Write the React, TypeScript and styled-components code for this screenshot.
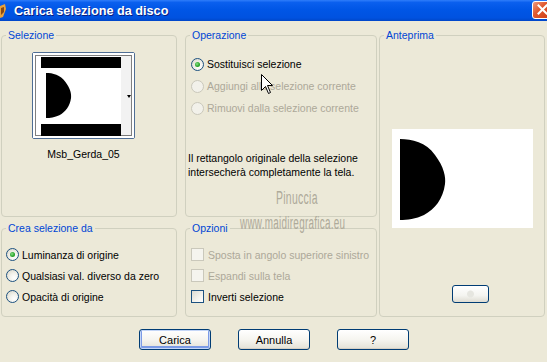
import React from 'react';
import styled, { createGlobalStyle } from 'styled-components';

const GlobalStyle = createGlobalStyle`
  html, body {
    margin: 0;
    padding: 0;
    background: #ece9d8;
  }
`;

const Window = styled.div`
  position: relative;
  width: 547px;
  height: 362px;
  overflow: hidden;
  background: #ece9d8;
  font-family: 'Liberation Sans', Arial, sans-serif;
  font-size: 10.5px;
  color: #000;
`;

const TitleBar = styled.div`
  height: 21px;
  display: flex;
  align-items: center;
  background: linear-gradient(to bottom, #2f7dfa 0%, #0a5fee 12%, #0056e6 45%, #0052e0 85%, #0046c8 100%);
  box-sizing: border-box;
`;

const TitleIcon = styled.div`
  width: 7px;
  height: 16px;
  margin-right: 7px;
  display: flex;
`;

const TitleText = styled.span`
  font-family: 'Liberation Sans', Arial, sans-serif;
  font-weight: bold;
  font-size: 12.7px;
  color: #fff;
  text-shadow: 1px 1px 0 #0a1e80;
  white-space: nowrap;
`;

const CloseButton = styled.div`
  margin-left: auto;
  margin-right: -6px;
  width: 21px;
  height: 18px;
  margin-top: -2px;
  box-sizing: border-box;
  border: 1px solid #fff;
  border-radius: 3px;
  background: linear-gradient(135deg, #ee9a80 0%, #e0582f 40%, #cc3d14 100%);
  display: flex;
  align-items: center;
  justify-content: center;
`;

const Body = styled.div`
  display: grid;
  grid-template-columns: 176px 8px 192px 2px 166px;
  grid-template-rows: 188px 95px;
  row-gap: 5px;
  padding: 8px 0 0 1px;
`;

const Group = styled.fieldset<{ $col: number; $row?: string }>`
  grid-column: ${(p) => p.$col};
  grid-row: ${(p) => p.$row ?? 'auto'};
  margin: 0;
  padding: 0;
  min-width: 0;
  border: 1px solid #d0d0bf;
  border-radius: 4px;
  box-sizing: border-box;
  display: flex;
  flex-direction: column;
  align-items: flex-start;
`;

const Legend = styled.legend`
  color: #0046d5;
  font-size: 10.5px;
  line-height: 13px;
  padding: 0 2px;
  margin-left: 4px;
`;

const ThumbColumn = styled.div`
  margin: 10px 0 0 30px;
  width: 103px;
  display: flex;
  flex-direction: column;
  align-items: center;
`;

const Thumb = styled.div`
  width: 103px;
  height: 87px;
  box-sizing: border-box;
  border: 1px solid #4f6e95;
  border-radius: 2px;
  background: #fff;
  display: flex;
`;

const ThumbLabel = styled.div`
  margin-top: 9px;
  line-height: 13px;
`;

const OptionList = styled.div<{ $top: number; $left: number; $row: number }>`
  margin-top: ${(p) => p.$top}px;
  padding-left: ${(p) => p.$left}px;
  display: flex;
  flex-direction: column;
  & > * {
    height: ${(p) => p.$row}px;
  }
`;

const OptionRow = styled.div<{ $disabled?: boolean; $gap: number }>`
  display: flex;
  align-items: center;
  gap: ${(p) => p.$gap}px;
  white-space: nowrap;
  color: ${(p) => (p.$disabled ? '#aca899' : '#000')};
`;

const RadioCircle = styled.span<{ $disabled?: boolean; $checked?: boolean }>`
  width: 13px;
  height: 13px;
  box-sizing: border-box;
  border-radius: 50%;
  border: 1px solid ${(p) => (p.$disabled ? '#cac8bb' : '#1c5180')};
  background: ${(p) =>
    p.$disabled ? '#f2f1ea' : 'radial-gradient(circle at 65% 70%, #ffffff 0%, #f3f2ec 40%, #d6d3c4 100%)'};
  display: flex;
  align-items: center;
  justify-content: center;
  flex: none;
  &::after {
    content: '';
    display: ${(p) => (p.$checked ? 'block' : 'none')};
    width: 5px;
    height: 5px;
    border-radius: 50%;
    background: radial-gradient(circle at 40% 40%, #8ae08a 0%, #2aa52a 55%, #1a8a1a 100%);
  }
`;

const CheckBox = styled.span<{ $disabled?: boolean }>`
  width: 13px;
  height: 13px;
  box-sizing: border-box;
  border: 1px solid ${(p) => (p.$disabled ? '#cac8bb' : '#1c5180')};
  background: ${(p) =>
    p.$disabled ? '#f5f4ee' : 'linear-gradient(135deg, #dcdbd2 0%, #f4f3ee 60%, #ffffff 100%)'};
  flex: none;
`;

const Note = styled.div`
  margin-top: 32px;
  padding-left: 2px;
  line-height: 14px;
`;

const Preview = styled.div`
  margin: 87px 0 0 12px;
  width: 141px;
  height: 99px;
  background: #fff;
  display: flex;
`;

const SmallButton = styled.div`
  margin: 57px 0 0 72px;
  width: 37px;
  height: 18px;
  box-sizing: border-box;
  border: 1px solid #003c74;
  border-radius: 3px;
  background:
    radial-gradient(circle at 50% 50%, #e6e6e0 0 3px, transparent 4px),
    linear-gradient(to bottom, #ffffff 0%, #f4f4f0 60%, #dedcd2 100%);
`;

const Footer = styled.div`
  display: flex;
  justify-content: center;
  gap: 27px;
  margin-top: 12px;
  padding-left: 1px;
`;

const Button = styled.div<{ $default?: boolean }>`
  width: 72px;
  height: 21px;
  box-sizing: border-box;
  border: 1px solid #003c74;
  border-radius: 3px;
  background: linear-gradient(to bottom, #ffffff 0%, #f6f5f0 50%, #e3e1d6 100%);
  box-shadow: ${(p) =>
    p.$default ? 'inset 0 0 0 1px #c4d6f7, inset 0 -1px 0 2px #7c9be6' : 'inset 0 -1px 0 #d6d0c5'};
  display: flex;
  align-items: center;
  justify-content: center;
  font-size: 11px;
`;

const Watermark = styled.div<{ $x: number; $y: number; $size: number; $squeeze: number }>`
  position: absolute;
  left: ${(p) => p.$x}px;
  top: ${(p) => p.$y}px;
  font-family: 'Liberation Sans', sans-serif;
  font-size: ${(p) => p.$size}px;
  line-height: 1;
  color: #aeaa9a;
  letter-spacing: 0.5px;
  white-space: nowrap;
  transform: scaleX(${(p) => p.$squeeze});
  transform-origin: left top;
  pointer-events: none;
`;

const Cursor = styled.svg`
  position: absolute;
  left: 261px;
  top: 74px;
`;

const DShape = ({ x, y, s = 1 }: { x: number; y: number; s?: number }) => (
  <path
    transform={`translate(${x} ${y}) scale(${s})`}
    d="M0 0 C12 0 26 3 35 16 C44 28 46 38 45 45 C43 60 35 70 24 76 C16 80 7 81 0 81 Z"
    fill="#000"
  />
);

const operations = [
  { label: 'Sostituisci selezione', checked: true, disabled: false },
  { label: 'Aggiungi alla selezione corrente', checked: false, disabled: true },
  { label: 'Rimuovi dalla selezione corrente', checked: false, disabled: true },
];

const sources = [
  { label: 'Luminanza di origine', checked: true },
  { label: 'Qualsiasi val. diverso da zero', checked: false },
  { label: 'Opacità di origine', checked: false },
];

const options = [
  { label: 'Sposta in angolo superiore sinistro', disabled: true },
  { label: 'Espandi sulla tela', disabled: true },
  { label: 'Inverti selezione', disabled: false },
];

export default function App() {
  return (
    <Window>
      <GlobalStyle />
      <TitleBar>
        <TitleIcon>
          <svg width="7" height="16" viewBox="0 0 7 16">
            <path d="M0 3 L5 1 L6 6 L3 14 L0 15 Z" fill="#e9a13b" />
            <path d="M1 5 L4 4 L4 9 L1 12 Z" fill="#8a4a14" />
          </svg>
        </TitleIcon>
        <TitleText>Carica selezione da disco</TitleText>
        <CloseButton>
          <svg width="11" height="11" viewBox="0 0 11 11">
            <path d="M1.5 1.5 L9.5 9.5 M9.5 1.5 L1.5 9.5" stroke="#fff" strokeWidth="2" strokeLinecap="square" />
          </svg>
        </CloseButton>
      </TitleBar>

      <Body>
        <Group $col={1}>
          <Legend>Selezione</Legend>
          <ThumbColumn>
            <Thumb>
              <svg width="101" height="85" viewBox="0 0 101 85">
                <rect x="0" y="0" width="101" height="85" fill="#fff" />
                <rect x="88" y="2" width="10" height="81" fill="#f2f2f2" />
                <rect x="8" y="4" width="80" height="11" fill="#000" />
                <rect x="8" y="71" width="80" height="12" fill="#000" />
                <DShape x={13} y={20} s={0.556} />
                <path d="M94 42 L98 42 L96 45 Z" fill="#000" />
                <rect
                  x="2.5"
                  y="2.5"
                  width="96"
                  height="80"
                  fill="none"
                  stroke="#000"
                  strokeWidth="1"
                  strokeDasharray="1 1"
                />
              </svg>
            </Thumb>
            <ThumbLabel>Msb_Gerda_05</ThumbLabel>
          </ThumbColumn>
        </Group>

        <Group $col={3}>
          <Legend>Operazione</Legend>
          <OptionList $top={11} $left={5} $row={22}>
            {operations.map((op) => (
              <OptionRow key={op.label} $disabled={op.disabled} $gap={3}>
                <RadioCircle $disabled={op.disabled} $checked={op.checked} />
                {op.label}
              </OptionRow>
            ))}
          </OptionList>
          <Note>
            Il rettangolo originale della selezione
            <br />
            intersecherà completamente la tela.
          </Note>
        </Group>

        <Group $col={5} $row="1 / span 2">
          <Legend>Anteprima</Legend>
          <Preview>
            <svg width="141" height="99" viewBox="0 0 141 99">
              <DShape x={8} y={10} />
            </svg>
          </Preview>
          <SmallButton />
        </Group>

        <Group $col={1}>
          <Legend>Crea selezione da</Legend>
          <OptionList $top={9} $left={4} $row={21}>
            {sources.map((s) => (
              <OptionRow key={s.label} $gap={3}>
                <RadioCircle $checked={s.checked} />
                {s.label}
              </OptionRow>
            ))}
          </OptionList>
        </Group>

        <Group $col={3}>
          <Legend>Opzioni</Legend>
          <OptionList $top={9} $left={5} $row={21}>
            {options.map((o) => (
              <OptionRow key={o.label} $disabled={o.disabled} $gap={4}>
                <CheckBox $disabled={o.disabled} />
                {o.label}
              </OptionRow>
            ))}
          </OptionList>
        </Group>
      </Body>

      <Footer>
        <Button $default>Carica</Button>
        <Button>Annulla</Button>
        <Button>?</Button>
      </Footer>

      <Watermark $x={276} $y={189} $size={18} $squeeze={0.58}>
        Pinuccia
      </Watermark>
      <Watermark $x={240} $y={214} $size={18} $squeeze={0.55}>
        www.maidiregrafica.eu
      </Watermark>

      <Cursor width="13" height="21" viewBox="0 0 13 21">
        <path d="M0.5 0.5 L0.5 16.5 L4.5 12.5 L7.5 19.5 L9.5 18.5 L6.5 11.5 L11.5 11.5 Z" fill="#fff" stroke="#000" strokeWidth="1" />
      </Cursor>
    </Window>
  );
}
